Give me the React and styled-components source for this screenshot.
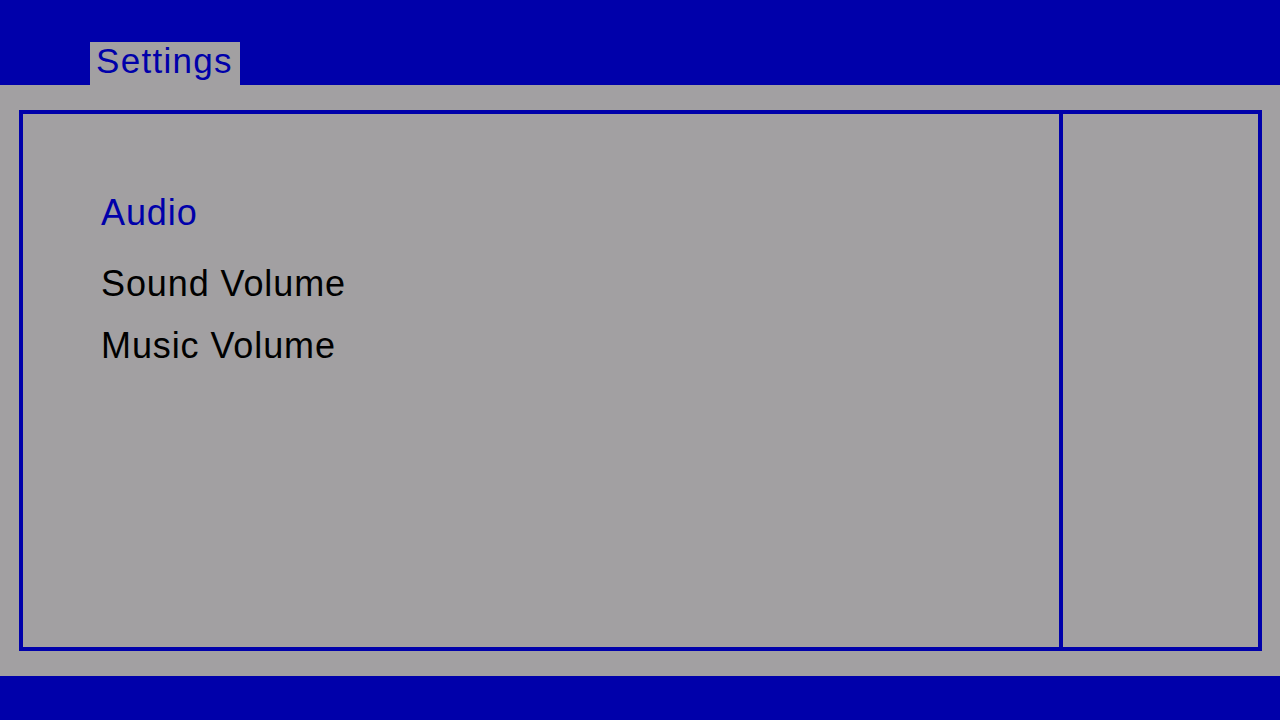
import React from "react";
import styled, { createGlobalStyle } from "styled-components";

const BLUE = "#0000aa";
const GRAY = "#a2a0a2";

const GlobalStyle = createGlobalStyle`
  html, body {
    margin: 0;
    padding: 0;
    background: ${GRAY};
  }

  body {
    font-family: "Liberation Sans", Arial, sans-serif;
  }
`;

const Screen = styled.div`
  display: flex;
  flex-direction: column;
  width: 1280px;
  height: 720px;
  background: ${GRAY};
  overflow: hidden;
`;

const TopBar = styled.header`
  display: flex;
  align-items: flex-end;
  height: 85px;
  padding-left: 90px;
  background: ${BLUE};
  flex-shrink: 0;
`;

const Tab = styled.div`
  width: 150px;
  height: 43px;
  box-sizing: border-box;
  padding: 1px 0 0 6px;
  background: ${GRAY};
  color: ${BLUE};
  font-size: 35px;
  line-height: 36px;
  letter-spacing: 1.3px;
`;

const Main = styled.main`
  flex: 1;
  display: flex;
  padding: 25px 18px 25px 19px;
`;

const Panel = styled.section`
  flex: 1;
  display: flex;
  border: 4px solid ${BLUE};
`;

const Content = styled.div`
  flex: 1;
  padding: 79px 0 0 78px;
`;

const Side = styled.aside`
  width: 195px;
  border-left: 4px solid ${BLUE};
`;

const Heading = styled.div`
  color: ${BLUE};
  font-size: 36px;
  line-height: 40px;
  letter-spacing: 0.9px;
  margin-bottom: 31px;
`;

const Option = styled.div`
  color: #000;
  font-size: 36px;
  line-height: 40px;
  letter-spacing: 0.9px;

  & + & {
    margin-top: 22px;
  }
`;

const BottomBar = styled.footer`
  height: 44px;
  background: ${BLUE};
  flex-shrink: 0;
`;

export default function App() {
  return (
    <>
      <GlobalStyle />
      <Screen>
        <TopBar>
          <Tab>Settings</Tab>
        </TopBar>
        <Main>
          <Panel>
            <Content>
              <Heading>Audio</Heading>
              <Option>Sound Volume</Option>
              <Option>Music Volume</Option>
            </Content>
            <Side />
          </Panel>
        </Main>
        <BottomBar />
      </Screen>
    </>
  );
}
